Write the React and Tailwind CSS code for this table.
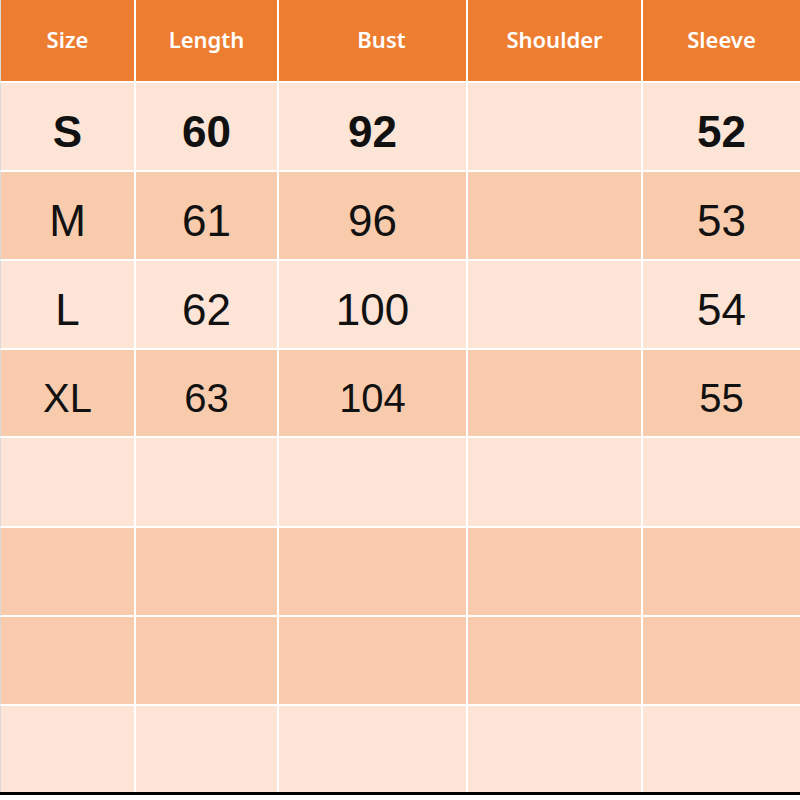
const headers = ['Size', 'Length', 'Bust', 'Shoulder', 'Sleeve'];

const rows = [
  { cells: ['S', '60', '92', '', '52'], bg: 'bg-[#fce4d6]', h: 'h-[89px]', text: 'text-[44px] font-bold' },
  { cells: ['M', '61', '96', '', '53'], bg: 'bg-[#f8cbad]', h: 'h-[89px]', text: 'text-[44px]' },
  { cells: ['L', '62', '100', '', '54'], bg: 'bg-[#fce4d6]', h: 'h-[89px]', text: 'text-[44px]' },
  { cells: ['XL', '63', '104', '', '55'], bg: 'bg-[#f8cbad]', h: 'h-[88px]', text: 'text-[40px]' },
  { cells: ['', '', '', '', ''], bg: 'bg-[#fce4d6]', h: 'h-[90px]', text: 'text-[44px]' },
  { cells: ['', '', '', '', ''], bg: 'bg-[#f8cbad]', h: 'h-[89px]', text: 'text-[44px]' },
  { cells: ['', '', '', '', ''], bg: 'bg-[#f8cbad]', h: 'h-[89px]', text: 'text-[44px]' },
  { cells: ['', '', '', '', ''], bg: 'bg-[#fce4d6]', h: 'h-[86px]', text: 'text-[44px]' },
];

const widths = ['w-[136px]', 'w-[143px]', 'w-[189px]', 'w-[175px]', 'w-[157px]'];

const App = () => {
  return (
    <div className="w-[800px] h-[800px] bg-white overflow-hidden">
      <div className="flex h-[83px]">
        {headers.map((label, i) => (
          <div
            key={label}
            className={`${widths[i]} h-full flex items-center justify-center bg-[#ed7d31] border-b-2 border-white ${
              i < 4 ? 'border-r-2' : ''
            } ${i === 2 ? 'pl-[18px]' : ''} ${i === 0 ? 'border-l border-l-[#d9d9d9]' : ''}`}
          >
            <span className="text-white text-[22px] font-semibold font-['Noto_Sans',sans-serif] pb-[2px]">
              {label}
            </span>
          </div>
        ))}
      </div>
      {rows.map((row, r) => (
        <div key={r} className={`flex ${row.h}`}>
          {row.cells.map((val, i) => (
            <div
              key={i}
              className={`${widths[i]} h-full flex items-center justify-center ${row.bg} border-white ${
                i < 4 ? 'border-r-2' : ''
              } ${r < rows.length - 1 ? 'border-b-2' : ''} ${i === 0 ? 'border-l border-l-[#d9d9d9]' : ''}`}
            >
              <span className={`${row.text} text-[#111] font-['Liberation_Sans',Arial,sans-serif] pt-[10px]`}>
                {val}
              </span>
            </div>
          ))}
        </div>
      ))}
      <div className="h-[3px] bg-black" />
    </div>
  );
};

export default App;
